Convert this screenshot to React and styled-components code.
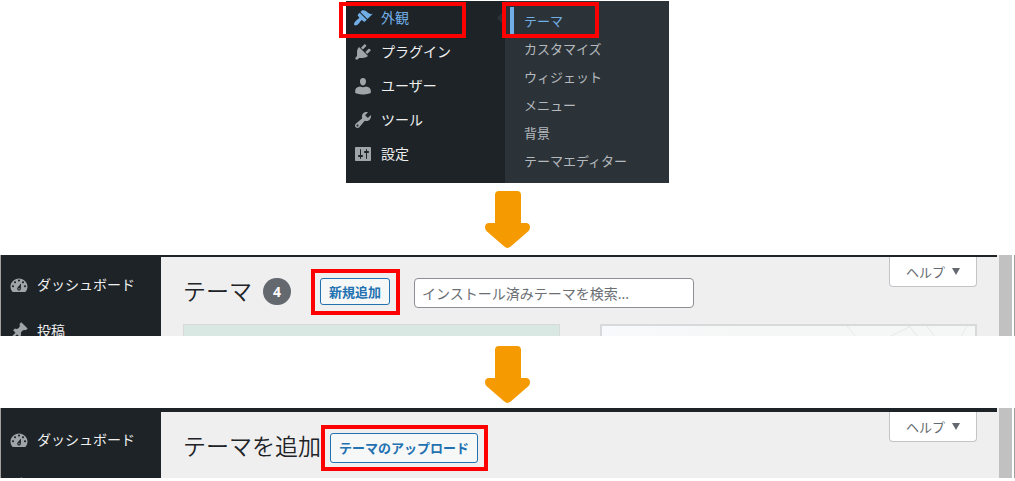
import React from 'react'
import styled, { createGlobalStyle } from 'styled-components'

const GlobalStyle = createGlobalStyle`
   *, *::before, *::after {
      box-sizing: border-box;
   }

   body {
      margin: 0;
      background: #fff;
      font-family: "Noto Sans", "Noto Sans CJK JP", sans-serif;
      font-size: 14px;
   }
`

const Page = styled.main`
   display: flex;
   flex-direction: column;
   padding-top: 1px;
   overflow: hidden;
`

const MenuPanel = styled.div`
   display: flex;
   align-self: center;
   background: #1d2327;
`

const MenuList = styled.ul`
   width: ${props => props.$width};
   margin: 0;
   padding: ${props => props.$pad || '0'};
   list-style: none;
`

const MenuItem = styled.li`
   position: relative;
   margin-bottom: ${props => (props.$separated ? '12px' : '0')};
`

const MenuLink = styled.a`
   display: flex;
   align-items: center;
   gap: 8px;
   height: 34px;
   padding-left: 7px;
   color: ${props => (props.$active ? '#72aee6' : '#f0f0f1')};
   line-height: 18px;
   white-space: nowrap;
   text-decoration: none;

   svg {
      flex: none;
      width: 20px;
      height: 20px;
      fill: ${props => (props.$active ? '#72aee6' : '#a0a5aa')};
   }
`

const SubMenu = styled.ul`
   position: relative;
   width: 164px;
   margin: 0;
   padding: 6px 0 8px 5px;
   background: #2c3338;
   list-style: none;

   &::before {
      content: "";
      position: absolute;
      top: 9px;
      right: 100%;
      border: 8px solid transparent;
      border-right-color: #2c3338;
      border-left-width: 0;
   }
`

const SubLink = styled.a`
   display: block;
   padding-left: 10px;
   border-left: 4px solid ${props => (props.$active ? '#72aee6' : 'transparent')};
   color: ${props => (props.$active ? '#72aee6' : '#b4b9be')};
   font-size: 13px;
   line-height: 28px;
   white-space: nowrap;
   text-decoration: none;
`

// red frame laid over the thing to click
const Frame = styled.span`
   position: absolute;
   z-index: 1;
   inset: ${props => props.$inset};
   border: 4px solid #f00;
   pointer-events: none;
`

const ArrowIcon = styled.svg`
   display: block;
   align-self: center;
   width: 45px;
   height: 57px;
   margin: ${props => props.$margin};
   fill: #f59a00;
`

const Screen = styled.section`
   display: flex;
   height: ${props => props.$height};
   border-left: 1px solid #a0a0a0;
   border-right: 1px solid #a0a0a0;
   overflow: hidden;
`

const Admin = styled.div`
   display: flex;
   flex: 1;
   min-width: 0;
   border-top: ${props => props.$bar} solid #1d2327;
`

const Sidebar = styled.nav`
   flex: none;
   background: #1d2327;
`

const Content = styled.div`
   flex: 1;
   min-width: 0;
   padding: 0 20px 0 22px;
   background: #efefef;
`

const Header = styled.header`
   display: flex;
   align-items: flex-start;
   justify-content: space-between;
   height: 67px;
`

const TitleRow = styled.div`
   display: flex;
   align-items: flex-start;
   padding-top: 21px;
`

const Title = styled.h1`
   margin: 0;
   color: #1d2327;
   font-family: "Noto Sans CJK JP", sans-serif;
   font-size: 23px;
   font-weight: 350;
   line-height: 24px;
   white-space: nowrap;
`

const Count = styled.span`
   width: 28px;
   margin: 0 29px 0 11px;
   border-radius: 14px;
   background: #646970;
   color: #fff;
   font-family: "Open Sans", sans-serif;
   font-weight: 700;
   line-height: 27px;
   text-align: center;
`

const Marked = styled.div`
   position: relative;
   margin-left: ${props => props.$gap || '0'};
`

const ActionButton = styled.button`
   display: block;
   height: ${props => props.$height};
   padding: 0 8px;
   border: 1px solid #2271b1;
   border-radius: 3px;
   background: #f6f7f7;
   color: #2271b1;
   font-family: inherit;
   font-size: 13px;
   font-weight: 700;
   line-height: 24px;
   white-space: nowrap;
`

const Search = styled.input`
   width: 280px;
   height: 30px;
   margin-left: 24px;
   padding: 0 7px;
   border: 1px solid #8c8f94;
   border-radius: 4px;
   background: #fff;
   font-family: inherit;
   font-size: 14px;

   &::placeholder {
      color: #6b6f74;
      opacity: 1;
   }
`

const HelpButton = styled.button`
   display: flex;
   align-items: center;
   justify-content: center;
   gap: 7px;
   width: 88px;
   height: 30px;
   padding: 0;
   border: 1px solid #c3c4c7;
   border-top: 0;
   border-radius: 0 0 4px 4px;
   background: #fff;
   color: #646970;
   font-family: inherit;
   font-size: 13px;

   &::after {
      content: "";
      border: 4px solid transparent;
      border-top: 7px solid #646970;
      border-bottom-width: 0;
   }
`

const Themes = styled.div`
   display: grid;
   grid-template-columns: 1fr 1fr;
   gap: 40px;
`

const ThemeCard = styled.div`
   height: 280px;
   border: ${props => props.$border} solid #d8d9da;
   background: ${props => props.$background};
   overflow: hidden;

   svg {
      display: block;
      margin-left: auto;
   }
`

const ScrollTrack = styled.div`
   flex: none;
   width: 17px;
   border-left: 2px solid #efefef;
   border-right: 2px solid #fff;
   background: #c1c1c1;
`

const icons = {
   appearance: 'M14.48 11.06L7.41 3.99l1.5-1.5c.5-.56 2.3-.47 3.51.32 1.21.8 1.43 1.28 2.91 2.1 1.18.64 2.45 1.26 4.45.85zm-.71.71L6.7 4.7 4.93 6.47c-.39.39-.39 1.02 0 1.41l1.06 1.06c.39.39.39 1.03 0 1.42-.6.6-1.43 1.11-2.21 1.69-.35.26-.7.53-1.01.84C1.43 14.23.4 16.08 1.4 17.07c.99 1 2.84-.03 4.18-1.36.31-.31.58-.66.85-1.02.57-.78 1.08-1.61 1.69-2.21.39-.39 1.02-.39 1.41 0l1.06 1.06c.39.39 1.02.39 1.41 0z',
   plugins: 'M13.11 4.36L9.87 7.6 8 5.73l3.24-3.24c.35-.34 1.05-.2 1.56.32.52.51.66 1.21.31 1.55zm-8 1.77l.91-1.12 9.01 9.01-1.19.84c-.71.71-2.63 1.16-3.82 1.16H6.14L4.9 17.26c-.59.59-1.54.59-2.12 0-.59-.58-.59-1.53 0-2.12l1.24-1.24v-3.88c0-1.13.4-3.19 1.09-3.89zm7.26 3.97l3.24-3.24c.34-.35 1.04-.21 1.55.31.52.51.66 1.21.31 1.55l-3.24 3.25z',
   users: 'M10 9.5c-2.4 0-3-3.2-3-3.7C6.800 3.6 8 2 10 2s3.200 1.600 3 3.800c0 .5-.6 3.700-3 3.700zM7 10.500c1.800 1 4.200 1 6 0 2.700.3 4.800 1.900 4.800 4.200v2.200s-3.800 1.500-7.800 1.500-7.800-1.500-7.800-1.500v-2.200c0-2.300 2.100-3.900 4.800-4.200z',
   tools: 'M16.68 9.77c-1.34 1.34-3.3 1.67-4.95.99l-5.41 6.52c-.99.99-2.59.99-3.58 0s-.99-2.59 0-3.57l6.52-5.42c-.68-1.65-.35-3.61.99-4.95 1.28-1.28 3.12-1.62 4.72-1.06l-2.89 2.89 2.82 2.82 2.86-2.87c.53 1.58.18 3.39-1.08 4.65zM3.81 16.21c.4.39 1.04.39 1.43 0 .4-.4.4-1.04 0-1.43-.39-.4-1.03-.4-1.43 0-.39.39-.39 1.03 0 1.43z',
   settings: 'M18 16V4c0-.55-.45-1-1-1H3c-.55 0-1 .45-1 1v12c0 .55.45 1 1 1h14c.55 0 1-.45 1-1zM8 11h1c.55 0 1 .45 1 1s-.45 1-1 1H8v1.5c0 .28-.22.5-.5.5s-.5-.22-.5-.5V13H6c-.55 0-1-.45-1-1s.45-1 1-1h1V5.5c0-.28.22-.5.5-.5s.5.22.5.5V11zm5-2h-1c-.55 0-1-.45-1-1s.45-1 1-1h1V5.5c0-.28.22-.5.5-.5s.5.22.5.5V7h1c.55 0 1 .45 1 1s-.45 1-1 1h-1v5.5c0 .28-.22.5-.5.5s-.5-.22-.5-.5V9z',
   dashboard: 'M3.76 17h12.48c1.3-1.37 2.26-3.11 2.26-5.300 0-4.500-3.800-8.200-8.500-8.200s-8.500 3.700-8.500 8.200c0 2.190.96 3.930 2.260 5.300zM10 4.500c.55 0 1 .45 1 1s-.45 1-1 1-1-.45-1-1 .45-1 1-1zM6 6.200c.55 0 1 .45 1 1s-.45 1-1 1-1-.45-1-1 .45-1 1-1zm8 0c.55 0 1 .45 1 1s-.45 1-1 1-1-.45-1-1 .45-1 1-1zm-5.200 6L12 8.500l-.200 5.200c0 1-.8 1.800-1.800 1.800s-1.800-.8-1.800-1.800c0-.6.200-1.100.6-1.500zM4 10.300c.55 0 1 .45 1 1s-.45 1-1 1-1-.45-1-1 .45-1 1-1zm12 0c.55 0 1 .45 1 1s-.45 1-1 1-1-.45-1-1 .45-1 1-1zm-5.300 3.400c0-.4-.3-.7-.7-.7s-.7.3-.7.7.3.7.7.7.7-.3.7-.7z',
   post: 'M10.44 3.02l1.82-1.82 6.36 6.35-1.83 1.82c-1.05-.68-2.48-.57-3.41.36l-.75.75c-.92.93-1.04 2.35-.35 3.41l-1.83 1.82-2.41-2.41-2.8 2.79c-.42.42-3.38 2.71-3.8 2.29s1.86-3.39 2.28-3.81l2.79-2.79L4.1 9.36l1.83-1.82c1.05.69 2.48.57 3.4-.36l.75-.75c.93-.92 1.05-2.35.36-3.41z',
}

const menu = [
   { icon: 'appearance', label: '外観', active: true },
   { icon: 'plugins', label: 'プラグイン' },
   { icon: 'users', label: 'ユーザー' },
   { icon: 'tools', label: 'ツール' },
   { icon: 'settings', label: '設定' },
]

const subMenu = ['テーマ', 'カスタマイズ', 'ウィジェット', 'メニュー', '背景', 'テーマエディター']

const Icon = ({ name }) => (
   <svg viewBox="0 0 20 20" aria-hidden="true">
      <path d={icons[name]} fillRule="evenodd" />
   </svg>
)

const Arrow = ({ margin }) => (
   <ArrowIcon $margin={margin} viewBox="0 0 45 57" aria-hidden="true">
      <path d="M14 0H32Q36 0 36 4V32H41Q45 32 45 36.500Q45 38.500 43 40.500L26 55.300Q22.500 58.500 19 55.300L2 40.500Q0 38.500 0 36.500Q0 32 4 32H10V4Q10 0 14 0Z" />
   </ArrowIcon>
)

const AdminScreen = ({ height, bar, children }) => (
   <Screen $height={height}>
      <Admin $bar={bar}>
         <Sidebar>
            <MenuList $width="160px" $pad="11px 0 0 1px">
               <MenuItem $separated>
                  <MenuLink href="#dashboard"><Icon name="dashboard" />ダッシュボード</MenuLink>
               </MenuItem>
               <MenuItem>
                  <MenuLink href="#posts"><Icon name="post" />投稿</MenuLink>
               </MenuItem>
            </MenuList>
         </Sidebar>
         <Content>{children}</Content>
      </Admin>
      <ScrollTrack />
   </Screen>
)

const Help = () => <HelpButton type="button">ヘルプ</HelpButton>

export default function App() {
   return (
      <Page>
         <GlobalStyle />
         <MenuPanel>
            <MenuList $width="159px">
               {menu.map(item => (
                  <MenuItem key={item.icon}>
                     <MenuLink href={`#${item.icon}`} $active={item.active}>
                        <Icon name={item.icon} />
                        {item.label}
                     </MenuLink>
                     {item.active && <Frame $inset="1px 39px -3px -7px" />}
                  </MenuItem>
               ))}
            </MenuList>
            <SubMenu>
               {subMenu.map((label, i) => (
                  <MenuItem key={label}>
                     <SubLink href="#themes" $active={i === 0}>{label}</SubLink>
                     {i === 0 && <Frame $inset="-5px 70px -3px -8px" />}
                  </MenuItem>
               ))}
            </SubMenu>
         </MenuPanel>

         <Arrow margin="8px 0 7px" />

         <AdminScreen height="81px" bar="2px">
            <Header>
               <TitleRow>
                  <Title>テーマ</Title>
                  <Count>4</Count>
                  <Marked>
                     <ActionButton type="button" $height="27px">新規追加</ActionButton>
                     <Frame $inset="-9px -10px -10px -9px" />
                  </Marked>
                  <Search
                     type="search"
                     aria-label="インストール済みテーマを検索"
                     placeholder="インストール済みテーマを検索..."
                  />
               </TitleRow>
               <Help />
            </Header>
            <Themes>
               <ThemeCard $border="1px" $background="#d9e8e2" />
               <ThemeCard $border="2px" $background="linear-gradient(90deg, #f8f9fc, #f5f7f6 40%)">
                  <svg width="130" height="40" viewBox="0 0 130 40" fill="none" stroke="#e6e8e8" aria-hidden="true">
                     <path d="M2 0L12 12M42 12L54 6L66 0M64 0L74 12M82 0L92 14M122 0L114 14" />
                  </svg>
               </ThemeCard>
            </Themes>
         </AdminScreen>

         <Arrow margin="10px 0 5px" />

         <AdminScreen height="70px" bar="4px">
            <Header>
               <TitleRow>
                  <Title>テーマを追加</Title>
                  <Marked $gap="9px">
                     <ActionButton type="button" $height="30px">テーマのアップロード</ActionButton>
                     <Frame $inset="-8px -10px -8px -9px" />
                  </Marked>
               </TitleRow>
               <Help />
            </Header>
         </AdminScreen>
      </Page>
   )
}
